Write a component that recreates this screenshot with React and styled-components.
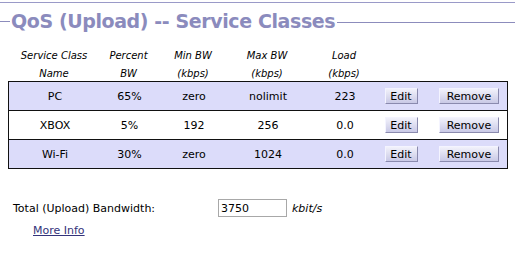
import React from "react";
import styled, { createGlobalStyle } from "styled-components";

const Global = createGlobalStyle`
  html, body { margin: 0; padding: 0; background: #fff; }
  body { font-family: "DejaVu Sans", Verdana, sans-serif; color: #000; }
`;

const Page = styled.div`
  width: 515px;
  height: 258px;
  padding-top: 2px;
  box-sizing: border-box;
  overflow: hidden;
`;

const TopRule = styled.div`
  height: 1px;
  background: #9a9ac8;
`;

const TitleRow = styled.div`
  display: flex;
  align-items: center;
  height: 24px;
  margin-top: 6px;
`;

const TitleLine = styled.div`
  height: 1px;
  background: #8c8cbc;
  width: ${(p) => (p.$grow ? "auto" : "10px")};
  flex: ${(p) => (p.$grow ? "1" : "none")};
  margin-top: ${(p) => (p.$grow ? "2px" : "0")};
`;

const Title = styled.h1`
  margin: 0 2px 0 1px;
  font-size: 19px;
  font-weight: bold;
  letter-spacing: -0.4px;
  color: #8b8bbd;
  line-height: 24px;
  white-space: nowrap;
`;

const cols = "92px 57px 72px 76px 78px 34px 1fr";

const HeadGrid = styled.div`
  display: grid;
  grid-template-columns: ${cols};
  margin: 10px 7px 0 8px;
  padding-top: 2px;
`;

const HeadCell = styled.div`
  font-size: 10px;
  font-style: italic;
  line-height: 18px;
  text-align: center;
  padding-top: 2px;
  height: 34px;
`;

const Table = styled.div`
  margin: 0 7px 0 8px;
  border: 1px solid #111;
`;

const Row = styled.div`
  display: grid;
  grid-template-columns: ${cols};
  align-items: center;
  height: 28px;
  background: ${(p) => (p.$alt ? "#ffffff" : "#dcdcfa")};
  & + & {
    border-top: 1px solid #111;
  }
`;

const Cell = styled.div`
  font-size: 11px;
  text-align: center;
  white-space: nowrap;
`;

const ButtonCell = styled.div`
  display: flex;
  justify-content: ${(p) => (p.$start ? "flex-start" : "center")};
  padding-left: ${(p) => (p.$start ? "21px" : "0")};
`;

const Btn = styled.button`
  font-family: "DejaVu Sans", Verdana, sans-serif;
  font-size: 11px;
  color: #000;
  height: 16px;
  width: ${(p) => p.$w}px;
  padding: 0;
  line-height: 13px;
  background: linear-gradient(#f2f2fb, #c9c9e6);
  border: 1px solid;
  border-color: #f4f4ff #8a8aae #8a8aae #f4f4ff;
  cursor: pointer;
`;

const TotalRow = styled.div`
  display: flex;
  align-items: center;
  margin: 30px 0 0 13px;
  height: 18px;
`;

const Label = styled.span`
  font-size: 11px;
  width: 205px;
`;

const Input = styled.input`
  box-sizing: border-box;
  width: 69px;
  height: 18px;
  border: 1px solid #a8a8a8;
  font-family: "DejaVu Sans", Verdana, sans-serif;
  font-size: 11px;
  padding: 0 2px;
  color: #000;
`;

const Unit = styled.span`
  font-size: 11px;
  font-style: italic;
  margin-left: 5px;
`;

const MoreLink = styled.a`
  display: inline-block;
  margin: 7px 0 0 33px;
  font-size: 11px;
  line-height: 14px;
  color: #33337a;
  text-decoration: underline;
`;

const rows = [
  ["PC", "65%", "zero", "nolimit", "223"],
  ["XBOX", "5%", "192", "256", "0.0"],
  ["Wi-Fi", "30%", "zero", "1024", "0.0"],
];

export default function App() {
  return (
    <>
      <Global />
      <Page>
        <TopRule />
        <TitleRow>
          <TitleLine />
          <Title>QoS (Upload) -- Service Classes</Title>
          <TitleLine $grow />
        </TitleRow>
        <HeadGrid>
          <HeadCell>Service Class<br />Name</HeadCell>
          <HeadCell>Percent<br />BW</HeadCell>
          <HeadCell>Min BW<br />(kbps)</HeadCell>
          <HeadCell>Max BW<br />(kbps)</HeadCell>
          <HeadCell>Load<br />(kbps)</HeadCell>
          <HeadCell />
          <HeadCell />
        </HeadGrid>
        <Table>
          {rows.map((r, i) => (
            <Row key={r[0]} $alt={i % 2 === 1}>
              {r.map((c, j) => (
                <Cell key={j}>{c}</Cell>
              ))}
              <ButtonCell>
                <Btn $w={33}>Edit</Btn>
              </ButtonCell>
              <ButtonCell $start>
                <Btn $w={60}>Remove</Btn>
              </ButtonCell>
            </Row>
          ))}
        </Table>
        <TotalRow>
          <Label>Total (Upload) Bandwidth:</Label>
          <Input defaultValue="3750" />
          <Unit>kbit/s</Unit>
        </TotalRow>
        <MoreLink href="#">More Info</MoreLink>
      </Page>
    </>
  );
}
